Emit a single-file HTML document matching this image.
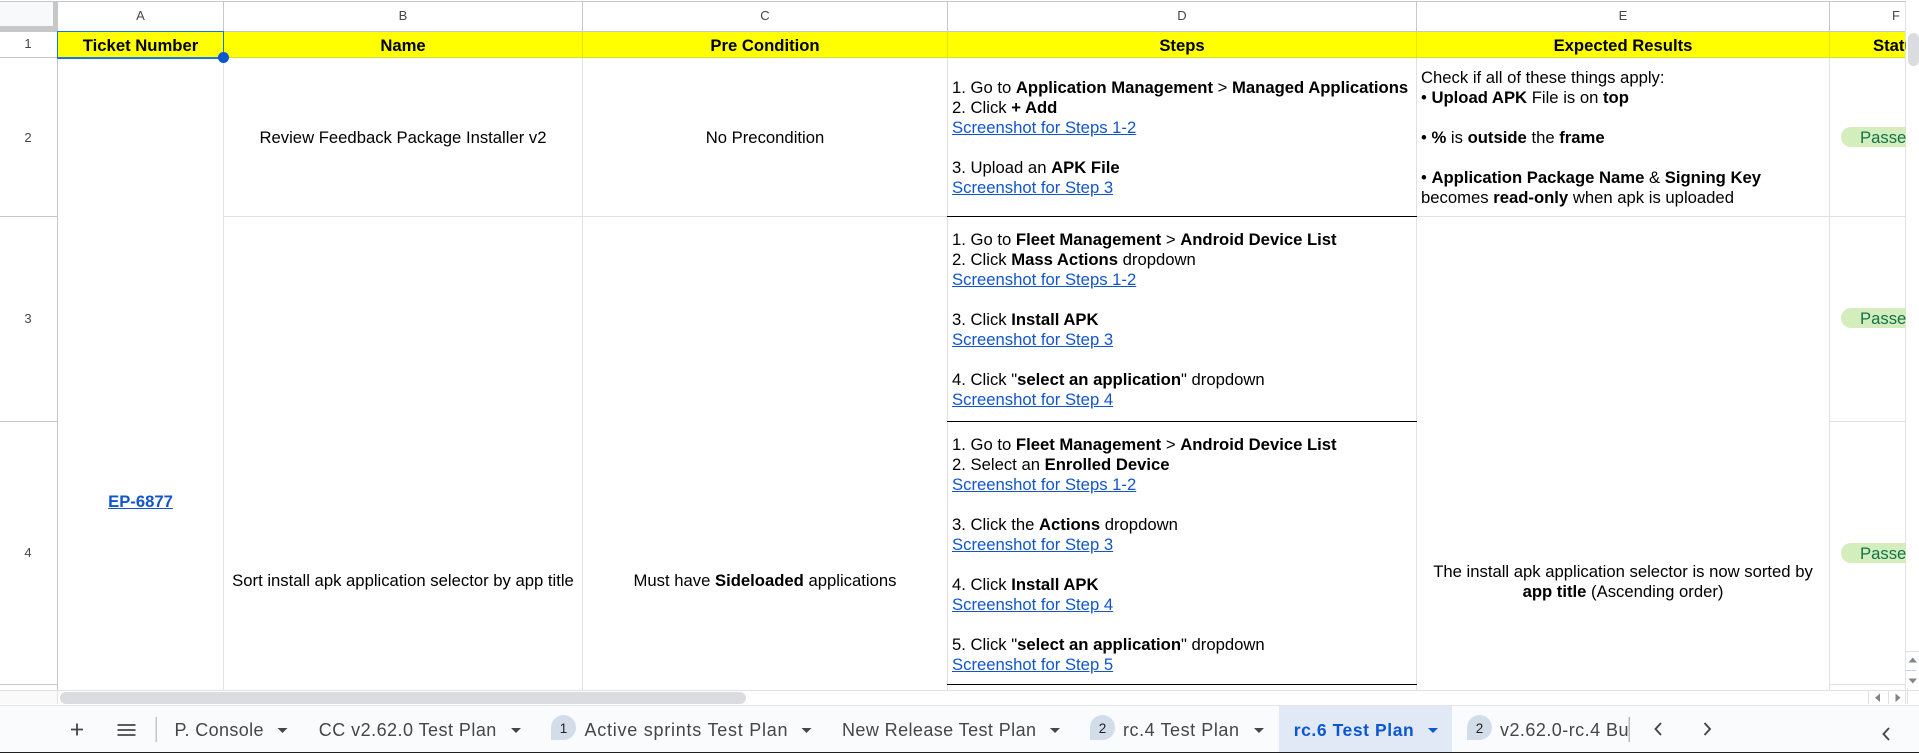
<!DOCTYPE html>
<html><head><meta charset="utf-8"><title>Test Plan</title>
<style>
html,body{margin:0;padding:0;background:#fff;width:1919px;height:753px;overflow:hidden}
body{position:relative;font-family:"Liberation Sans",Arial,sans-serif;font-size:16.67px;color:#000}
.r{position:absolute;background:#e1e1e1}
.l{position:absolute;height:20px;line-height:20px;white-space:nowrap;margin-top:1px}
.c{text-align:center}
a{color:#1155cc;text-decoration:underline}
.h{position:absolute;height:20px;line-height:20px;font-size:13px;color:#444746;text-align:center}
.p{position:absolute;left:1841px;width:64.5px;height:20px;background:#d4edbc;border-radius:10px 0 0 10px;overflow:hidden;color:#11734b;line-height:20px;padding-left:0}
.p span{position:absolute;left:19px;top:1px}
</style></head><body>
<!-- yellow header -->
<div style="position:absolute;left:58px;top:32px;width:1848px;height:25px;background:#ff0"></div>
<!-- corner -->
<div style="position:absolute;left:0;top:2px;width:57px;height:30px;background:#c7c7c7"></div>
<div style="position:absolute;left:0;top:2px;width:53px;height:24px;background:#f8f9fa"></div>
<!-- top line and header lines -->
<div class="r" style="left:0;top:1px;width:1906px;height:1px;background:#c7c7c7"></div>
<div class="r" style="left:57px;top:31px;width:1849px;height:1px;background:#c7c7c7"></div>
<div class="r" style="left:0;top:57px;width:57px;height:1px;background:#c7c7c7"></div>
<div class="r" style="left:58px;top:57px;width:1848px;height:1px;background:#dcdc30"></div>
<!-- row header lines -->
<div class="r" style="left:0;top:216px;width:57px;height:1px;background:#c7c7c7"></div>
<div class="r" style="left:0;top:421px;width:57px;height:1px;background:#c7c7c7"></div>
<div class="r" style="left:0;top:684px;width:57px;height:1px;background:#c7c7c7"></div>
<div class="r" style="left:57px;top:2px;width:1px;height:702px;background:#c7c7c7"></div>
<!-- column header separators -->
<div class="r" style="left:223px;top:2px;width:1px;height:30px;background:#c7c7c7"></div>
<div class="r" style="left:582px;top:2px;width:1px;height:30px;background:#c7c7c7"></div>
<div class="r" style="left:947px;top:2px;width:1px;height:30px;background:#c7c7c7"></div>
<div class="r" style="left:1416px;top:2px;width:1px;height:30px;background:#c7c7c7"></div>
<div class="r" style="left:1829px;top:2px;width:1px;height:30px;background:#c7c7c7"></div>
<!-- yellow cell separators -->
<div class="r" style="left:582px;top:32px;width:1px;height:25px;background:#e6e600"></div>
<div class="r" style="left:947px;top:32px;width:1px;height:25px;background:#e6e600"></div>
<div class="r" style="left:1416px;top:32px;width:1px;height:25px;background:#e6e600"></div>
<div class="r" style="left:1829px;top:32px;width:1px;height:25px;background:#e6e600"></div>
<!-- grid columns -->
<div class="r" style="left:223px;top:58px;width:1px;height:632px"></div>
<div class="r" style="left:582px;top:58px;width:1px;height:632px"></div>
<div class="r" style="left:947px;top:58px;width:1px;height:632px"></div>
<div class="r" style="left:1416px;top:58px;width:1px;height:632px"></div>
<div class="r" style="left:1829px;top:58px;width:1px;height:632px"></div>
<div class="r" style="left:1905px;top:2px;width:1px;height:702px"></div>
<!-- grid rows -->
<div class="r" style="left:224px;top:216px;width:723px;height:1px"></div>
<div class="r" style="left:1417px;top:216px;width:488px;height:1px"></div>
<div class="r" style="left:1830px;top:421px;width:75px;height:1px"></div>
<div class="r" style="left:1830px;top:684px;width:75px;height:1px"></div>
<div class="r" style="left:947px;top:216px;width:470px;height:1px;background:#000"></div>
<div class="r" style="left:947px;top:421px;width:470px;height:1px;background:#000"></div>
<div class="r" style="left:947px;top:684px;width:470px;height:1px;background:#000"></div>
<div class="r" style="left:0;top:690px;width:1919px;height:1px"></div>

<!-- column headers -->
<div class="h" style="left:58px;width:165px;top:6px">A</div>
<div class="h" style="left:224px;width:358px;top:6px">B</div>
<div class="h" style="left:583px;width:364px;top:6px">C</div>
<div class="h" style="left:948px;width:468px;top:6px">D</div>
<div class="h" style="left:1417px;width:412px;top:6px">E</div>
<div class="h" style="left:1886px;width:20px;top:6px">F</div>
<!-- row headers -->
<div class="h" style="left:0;width:56px;top:34px">1</div>
<div class="h" style="left:0;width:56px;top:127.5px">2</div>
<div class="h" style="left:0;width:56px;top:309px">3</div>
<div class="h" style="left:0;width:56px;top:542.5px">4</div>

<!-- header row -->
<div class="l c" style="left:58px;width:165px;top:35px"><b>Ticket Number</b></div>
<div class="l c" style="left:224px;width:358px;top:35px"><b>Name</b></div>
<div class="l c" style="left:583px;width:364px;top:35px"><b>Pre Condition</b></div>
<div class="l c" style="left:948px;width:468px;top:35px"><b>Steps</b></div>
<div class="l c" style="left:1417px;width:412px;top:35px"><b>Expected Results</b></div>
<div style="position:absolute;left:1830px;top:35px;width:75.5px;height:21px;overflow:hidden"><div class="l" style="left:43px;top:0"><b>Status</b></div></div>

<!-- selection -->
<div style="position:absolute;left:57px;top:31px;width:165px;height:25px;border:1px solid #1a73e8;border-bottom:2px solid #1a73e8;box-sizing:content-box"></div>
<div style="position:absolute;left:217.5px;top:52px;width:11px;height:11px;border-radius:50%;background:#0b57d0;border:0"></div>

<!-- A merged -->
<div class="l c" style="left:58px;width:165px;top:491px"><a href="#"><b>EP-6877</b></a></div>

<!-- B -->
<div class="l c" style="left:224px;width:358px;top:127px">Review Feedback Package Installer v2</div>
<div class="l c" style="left:224px;width:358px;top:570px">Sort install apk application selector by app title</div>
<!-- C -->
<div class="l c" style="left:583px;width:364px;top:127px">No Precondition</div>
<div class="l c" style="left:583px;width:364px;top:570px">Must have <b>Sideloaded</b> applications</div>

<!-- D row 2 -->
<div class="l" style="left:952px;top:77px">1. Go to <b>Application Management</b> &gt; <b>Managed Applications</b></div>
<div class="l" style="left:952px;top:97px">2. Click <b>+ Add</b></div>
<div class="l" style="left:952px;top:117px"><a href="#">Screenshot for Steps 1-2</a></div>
<div class="l" style="left:952px;top:157px">3. Upload an <b>APK File</b></div>
<div class="l" style="left:952px;top:177px"><a href="#">Screenshot for Step 3</a></div>
<!-- D row 3 -->
<div class="l" style="left:952px;top:229px">1. Go to <b>Fleet Management</b> &gt; <b>Android Device List</b></div>
<div class="l" style="left:952px;top:249px">2. Click <b>Mass Actions</b> dropdown</div>
<div class="l" style="left:952px;top:269px"><a href="#">Screenshot for Steps 1-2</a></div>
<div class="l" style="left:952px;top:309px">3. Click <b>Install APK</b></div>
<div class="l" style="left:952px;top:329px"><a href="#">Screenshot for Step 3</a></div>
<div class="l" style="left:952px;top:369px">4. Click "<b>select an application</b>" dropdown</div>
<div class="l" style="left:952px;top:389px"><a href="#">Screenshot for Step 4</a></div>
<!-- D row 4 -->
<div class="l" style="left:952px;top:434px">1. Go to <b>Fleet Management</b> &gt; <b>Android Device List</b></div>
<div class="l" style="left:952px;top:454px">2. Select an <b>Enrolled Device</b></div>
<div class="l" style="left:952px;top:474px"><a href="#">Screenshot for Steps 1-2</a></div>
<div class="l" style="left:952px;top:514px">3. Click the <b>Actions</b> dropdown</div>
<div class="l" style="left:952px;top:534px"><a href="#">Screenshot for Step 3</a></div>
<div class="l" style="left:952px;top:574px">4. Click <b>Install APK</b></div>
<div class="l" style="left:952px;top:594px"><a href="#">Screenshot for Step 4</a></div>
<div class="l" style="left:952px;top:634px">5. Click "<b>select an application</b>" dropdown</div>
<div class="l" style="left:952px;top:654px"><a href="#">Screenshot for Step 5</a></div>

<!-- E -->
<div class="l" style="left:1421px;top:67px">Check if all of these things apply:</div>
<div class="l" style="left:1421px;top:87px">• <b>Upload APK</b> File is on <b>top</b></div>
<div class="l" style="left:1421px;top:127px">• <b>%</b> is <b>outside</b> the <b>frame</b></div>
<div class="l" style="left:1421px;top:167px">• <b>Application Package Name</b> &amp; <b>Signing Key</b></div>
<div class="l" style="left:1421px;top:187px">becomes <b>read-only</b> when apk is uploaded</div>
<div class="l c" style="left:1417px;width:412px;top:561px">The install apk application selector is now sorted by</div>
<div class="l c" style="left:1417px;width:412px;top:581px"><b>app title</b> (Ascending order)</div>

<!-- F pills -->
<div class="p" style="top:127px"><span>Passed</span></div>
<div class="p" style="top:308px"><span>Passed</span></div>
<div class="p" style="top:543px"><span>Passed</span></div>

<!-- scrollbars -->
<div style="position:absolute;left:1908px;top:33px;width:11px;height:33px;background:#dadce0;border-radius:6px"></div>
<div style="position:absolute;left:60px;top:692px;width:686px;height:12px;background:#dadce0;border-radius:6px"></div>
<div class="r" style="left:57px;top:690px;width:1px;height:14px;background:#e1e1e1"></div>
<div class="r" style="left:0;top:691px;width:57px;height:13px;background:#fafafa"></div>
<div class="r" style="left:1906px;top:651px;width:13px;height:1px"></div>
<div class="r" style="left:1906px;top:670px;width:10px;height:1px;background:#c4d0ee"></div>
<div class="r" style="left:1868px;top:691px;width:1px;height:13px"></div>
<div class="r" style="left:1888px;top:691px;width:1px;height:13px"></div>
<div class="r" style="left:1907px;top:688px;width:1px;height:16px"></div>

<svg width="1919" height="753" viewBox="0 0 1919 753" style="position:absolute;left:0;top:0;pointer-events:none" font-family="Liberation Sans, sans-serif">
<defs><clipPath id="cl"><rect x="1490" y="706" width="138" height="46"/></clipPath></defs>
<!-- small arrows -->
<path d="M1880 693.5v8.5l-5-4.2z" fill="#80858a"/>
<path d="M1895.5 693.5v8.5l5-4.2z" fill="#80858a"/>
<path d="M1908.5 662.5h8.5l-4.2-5z" fill="#80858a"/>
<path d="M1908.5 678.5h8.5l-4.2 5z" fill="#80858a"/>
<!-- tab bar -->
<rect x="0" y="705" width="1919" height="47" fill="#f9fbfd"/>
<rect x="0" y="705" width="1919" height="1" fill="#e3e5e6"/>
<rect x="0" y="752" width="1919" height="1" fill="#1f1f1f"/>
<rect x="1279" y="706" width="173" height="46" fill="#e1e9f7"/>
<!-- plus -->
<path d="M77 723.5v12M71 729.5h12" stroke="#444746" stroke-width="1.8" fill="none"/>
<!-- menu -->
<path d="M117.5 725h18M117.5 730h18M117.5 735h18" stroke="#444746" stroke-width="1.8" fill="none"/>
<rect x="155.5" y="717" width="1.5" height="25" fill="#c7c7c7"/>
<g fill="#444746" font-size="18">
<text x="174.5" y="736" textLength="89" lengthAdjust="spacing">P. Console</text>
<text x="318.8" y="736" textLength="177.5" lengthAdjust="spacing">CC v2.62.0 Test Plan</text>
<text x="584.5" y="736" textLength="203" lengthAdjust="spacing">Active sprints Test Plan</text>
<text x="842" y="736" textLength="194" lengthAdjust="spacing">New Release Test Plan</text>
<text x="1123" y="736" textLength="116" lengthAdjust="spacing">rc.4 Test Plan</text>
<g clip-path="url(#cl)"><text x="1500" y="736" textLength="139" lengthAdjust="spacing">v2.62.0-rc.4 Bug</text></g>
</g>
<text x="1293.7" y="736" textLength="120" lengthAdjust="spacing" fill="#0b57d0" font-size="17.5" font-weight="bold">rc.6 Test Plan</text>
<g fill="#444746">
<path d="M277.5 728h10l-5 5z"/>
<path d="M511 728h10l-5 5z"/>
<path d="M801.5 728h10l-5 5z"/>
<path d="M1050 728h10l-5 5z"/>
<path d="M1254 728h10l-5 5z"/>
</g>
<path d="M1428 728h10l-5 5z" fill="#0b57d0"/>
<!-- badges -->
<g fill="#d3dde9">
<path d="M551 727.5a12.5 12.5 0 0 1 25 0a12.5 12.5 0 0 1-12.5 12.5H551z"/>
<path d="M1090 727.5a12.5 12.5 0 0 1 25 0a12.5 12.5 0 0 1-12.5 12.5H1090z"/>
<path d="M1467 727.5a12.5 12.5 0 0 1 25 0a12.5 12.5 0 0 1-12.5 12.5H1467z"/>
</g>
<g fill="#1f1f1f" font-size="13.5" text-anchor="middle">
<text x="563.5" y="733">1</text>
<text x="1102.5" y="733">2</text>
<text x="1479.5" y="733">2</text>
</g>
<rect x="1628.5" y="717" width="1.5" height="25" fill="#b8b8b8"/>
<!-- chevrons -->
<path d="M1661 723l-5.5 6 5.5 6" stroke="#444746" stroke-width="1.9" fill="none"/>
<path d="M1704.5 723l5.5 6-5.5 6" stroke="#444746" stroke-width="1.9" fill="none"/>
<path d="M1889 728l-5.5 6 5.5 6" stroke="#444746" stroke-width="1.9" fill="none"/>
</svg>
</body></html>
